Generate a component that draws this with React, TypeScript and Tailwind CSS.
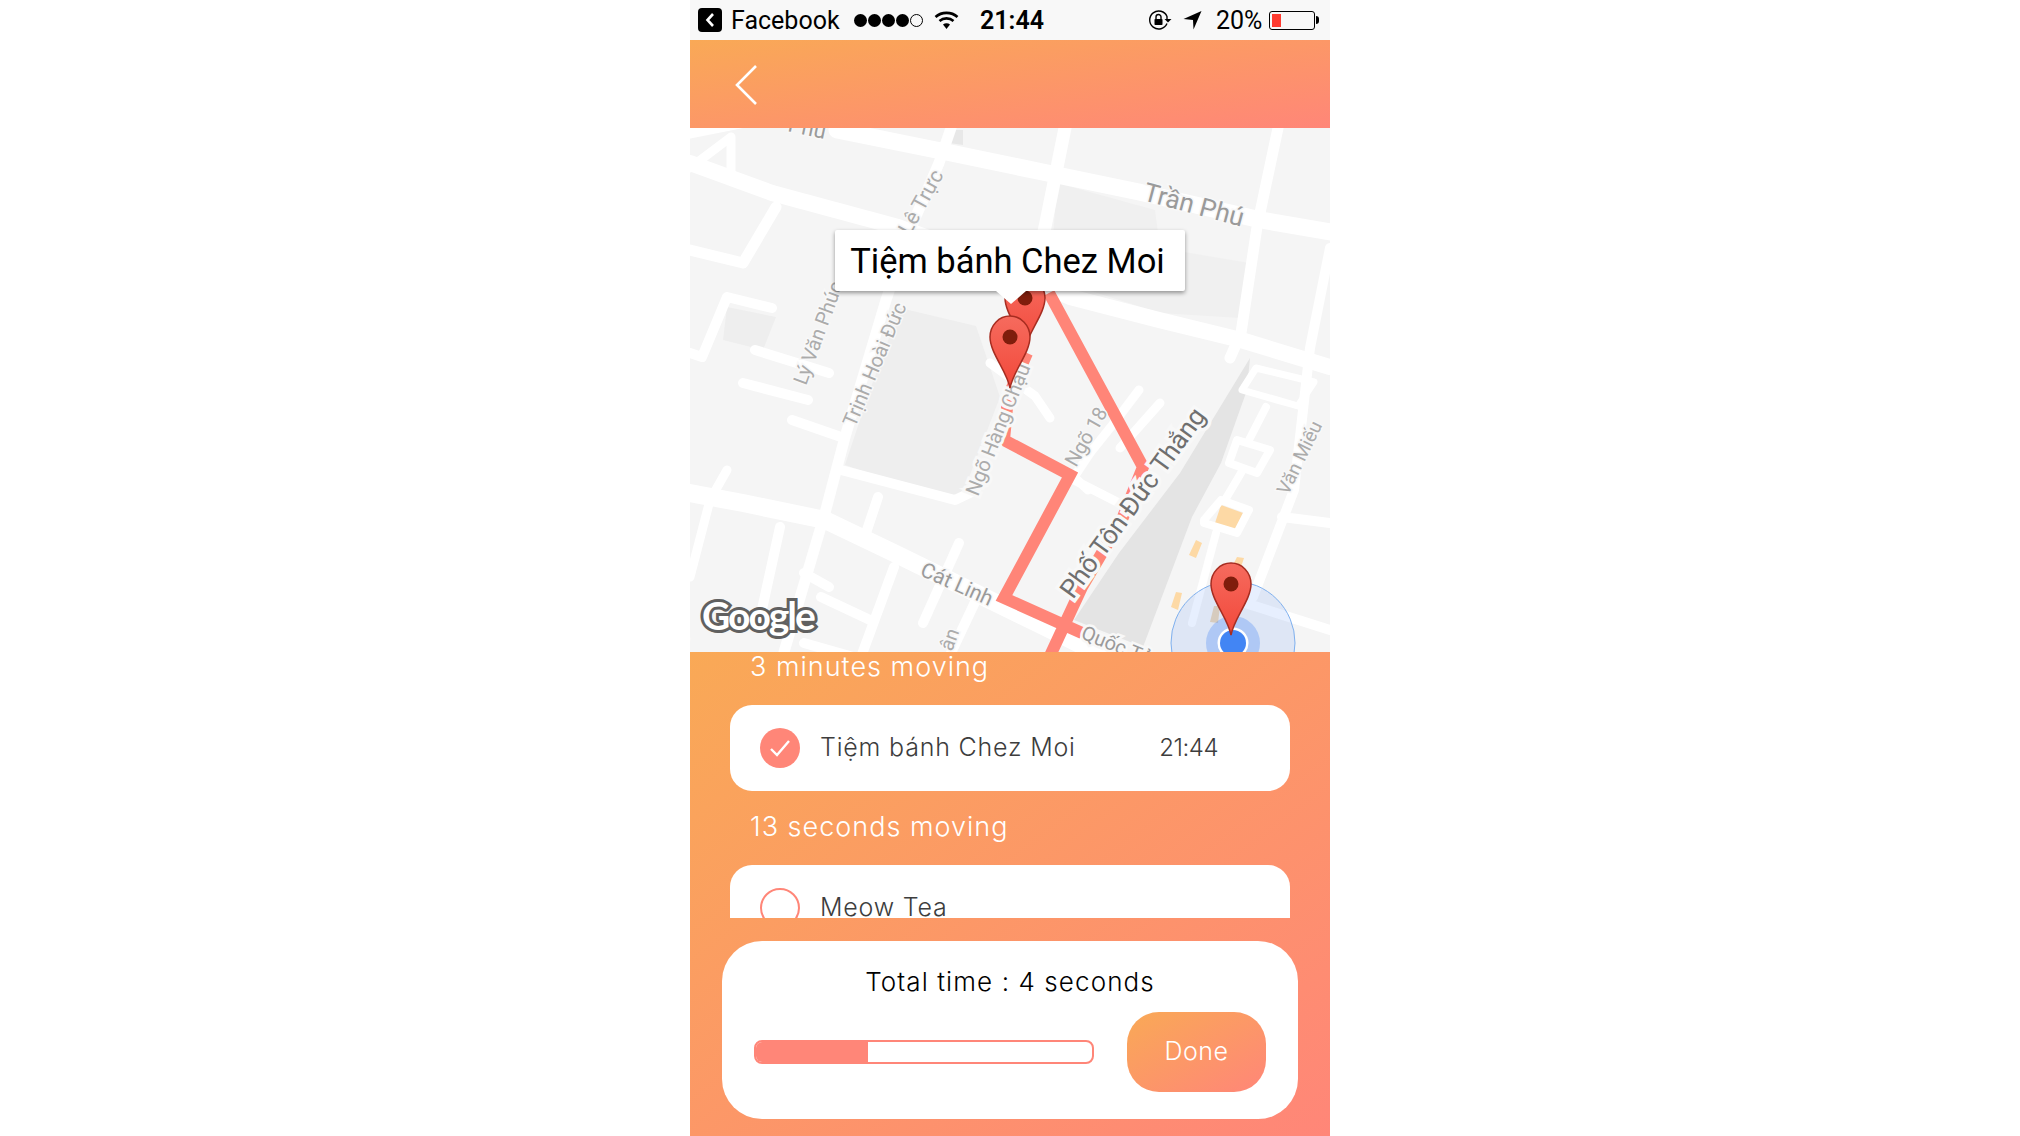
const uiFont = { fontFamily: '"Inter", "Noto Sans", sans-serif' };

const roads: { d: string; w: number }[] = [
  { d: "M0 2 L60 -10 M147 2 L261 25 L367 47 L449 64 L571 92 L640 104", w: 17 },
  { d: "M0 35 L82 65 L208 99 L300 132 L380 169 L469 192 L551 212 L640 239", w: 16 },
  { d: "M375 0 L355 99 L340 165", w: 13 },
  { d: "M588 0 L567 99 L551 205 L540 230", w: 11 },
  { d: "M261 0 L249 35 L220 102 L196 172 L155 309 L135 385 L94 524", w: 11 },
  { d: "M37 169 L12 229 L0 225 M37 169 L82 180", w: 10 },
  { d: "M86 79 L53 135 L0 122", w: 11 },
  { d: "M41 9 L41 45 M41 9 L0 40", w: 9 },
  { d: "M65 222 L139 245 M53 255 L118 272 M102 292 L151 309", w: 10 },
  { d: "M0 365 L53 375 L135 392 L204 425 L347 495 L408 525", w: 18 },
  { d: "M151 342 L265 372 L286 362", w: 10 },
  { d: "M37 342 L20 372 L0 449", w: 9 },
  { d: "M90 399 L69 495 M188 369 L176 405 M204 439 L171 529", w: 10 },
  { d: "M114 445 L139 459 M131 469 L180 492 M269 415 L233 495 M286 472 L261 525 M114 515 L163 529", w: 10 },
  { d: "M384 352 L429 375 M449 262 L424 295 L400 325 L384 349 L398 362", w: 9 },
  { d: "M547 312 L580 322 L567 345 L539 335 Z M576 279 L559 312 M551 345 L535 372", w: 8 },
  { d: "M514 392 L531 372 L559 382 L547 405 L514 395 Z M526 405 L502 495", w: 8 },
  { d: "M640 120 L620 220 L604 362 L563 469 M592 389 L640 395 M555 475 L640 502", w: 10 },
  { d: "M566 240 L624 254 L608 278 L552 262 Z", w: 7 },
  { d: "M470 275 L430 320 M300 235 L345 268 L360 290", w: 9 },
];

const blocks = [
  { points: "210,180 286,198 310,269 273,365 257,372 155,337 180,262", fill: "#eeeeee" },
  { points: "367,55 465,82 470,120 560,135 550,190 470,185 360,150", fill: "#f0f0f0" },
  { points: "37,179 86,189 73,222 33,212", fill: "#eeeeee" },
  { points: "261,2 273,2 273,17 259,15", fill: "#e8e8e8" },
  { points: "560,230 557,262 531,335 502,389 453,519 384,492 429,425 490,345", fill: "#e4e4e4" },
  { points: "531,377 553,385 545,402 525,395", fill: "#fdd9a5" },
  { points: "506,412 512,415 506,430 499,427", fill: "#fdd9a5" },
  { points: "486,464 492,465 488,482 481,479", fill: "#fdd9a5" },
  { points: "547,429 554,430 551,439 543,437", fill: "#fdd9a5" },
  { points: "524,478 530,478 528,495 520,494", fill: "#ecd6b6" },
];

const labels = [
  { text: "Phú", x: 97, y: 3, r: 12, size: 22, fill: "#9a9a9a", halo: 3 },
  { text: "Trần Phú", x: 452, y: 72, r: 15, size: 26, fill: "#9a9a9a", halo: 3 },
  { text: "Lê Trực", x: 220, y: 108, r: -61, size: 21, fill: "#ababab", halo: 3 },
  { text: "Lý Văn Phúc", x: 116, y: 258, r: -70, size: 20, fill: "#ababab", halo: 3 },
  { text: "Trịnh Hoài Đức", x: 165, y: 300, r: -67, size: 20, fill: "#ababab", halo: 3 },
  { text: "Ngõ Hàng Chậu", x: 288, y: 369, r: -68, size: 20, fill: "#ababab", halo: 6 },
  { text: "Ngõ 18", x: 386, y: 340, r: -60, size: 20, fill: "#ababab", halo: 3 },
  { text: "Văn Miếu", x: 598, y: 368, r: -64, size: 19, fill: "#ababab", halo: 3 },
  { text: "Cát Linh", x: 229, y: 447, r: 24, size: 21, fill: "#9a9a9a", halo: 3 },
  { text: "Quốc Tử Giám", x: 390, y: 510, r: 22, size: 20, fill: "#9a9a9a", halo: 5 },
  { text: "Phố Tôn Đức Thắng", x: 383, y: 472, r: -54, size: 26, fill: "#6f6f6f", halo: 7 },
  { text: "ân", x: 262, y: 524, r: -70, size: 20, fill: "#ababab", halo: 3 },
  { text: "h", x: -4, y: 520, r: -70, size: 20, fill: "#ababab", halo: 3 },
];

function Pin({ x, y }: { x: number; y: number }) {
  return (
    <g transform={`translate(${x} ${y})`}>
      <path
        d="M0 51 C-3 34 -20 16 -20 0 A20 21 0 0 1 20 0 C20 16 3 34 0 51 Z"
        fill="url(#pinFill)"
        stroke="#a62c20"
        strokeWidth="1.5"
      />
      <circle r="7.5" fill="#7f1d0c" />
    </g>
  );
}

function StatusBar() {
  return (
    <div className="h-10 bg-[#f8f8f8] flex items-center pl-2 text-black" style={{ fontFamily: "Roboto, sans-serif" }}>
      <div className="w-6 h-6 rounded-[4px] bg-black flex items-center justify-center">
        <svg width="12" height="16" viewBox="0 0 12 16" fill="none">
          <path d="M9 2 L3.5 8 L9 14" stroke="white" strokeWidth="2.6" />
        </svg>
      </div>
      <span className="ml-[9px] w-[110px] text-[25px] leading-none">Facebook</span>
      <div className="ml-[13px] flex items-center gap-[1px]">
        <span className="w-[13px] h-[13px] rounded-full bg-black" />
        <span className="w-[13px] h-[13px] rounded-full bg-black" />
        <span className="w-[13px] h-[13px] rounded-full bg-black" />
        <span className="w-[13px] h-[13px] rounded-full bg-black" />
        <span className="w-[13px] h-[13px] rounded-full border border-black" />
      </div>
      <svg className="ml-[11px]" width="25" height="20" viewBox="0 0 25 20" fill="none">
        <path d="M1.5 7 C7.5 1.5 17.5 1.5 23.5 7" stroke="black" strokeWidth="2.6" />
        <path d="M5.5 11 C9.5 7.5 15.5 7.5 19.5 11" stroke="black" strokeWidth="2.6" />
        <path d="M9 14.5 C11 12.8 14 12.8 16 14.5 L12.5 19 Z" fill="black" />
      </svg>
      <span className="ml-[21px] w-[66px] text-[25px] leading-none font-semibold">21:44</span>
      <svg className="ml-[102px]" width="24" height="20" viewBox="0 0 24 20" fill="none">
        <path d="M19 13.5 A9 9 0 1 1 19 6.5 L19 9" stroke="black" strokeWidth="1.4" />
        <path d="M16.5 9 L23.5 9 L20 12.5 Z" fill="black" />
        <rect x="6.5" y="9" width="8" height="6" rx="0.8" fill="black" />
        <path d="M8 9 V7 A2.5 2.5 0 0 1 13 7 V9" stroke="black" strokeWidth="1.4" />
      </svg>
      <svg className="ml-[11px]" width="19" height="20" viewBox="0 0 19 20">
        <path d="M18.5 1 L10.5 19.5 L10 10 L0.5 9 Z" fill="black" />
      </svg>
      <span className="ml-[14px] w-[50px] text-[25px] leading-none">20%</span>
      <div className="ml-[3px] w-[46px] h-[19px] rounded-[3px] border border-black p-[2px] relative">
        <div className="w-[9px] h-full bg-[#ff3b30]" />
        <div className="absolute right-[-5px] top-[4px] w-[3px] h-[8px] rounded-r-sm bg-black" />
      </div>
    </div>
  );
}

function MapView() {
  return (
    <div className="relative h-[524px] overflow-hidden bg-[#f5f5f5]">
      <svg width="640" height="524" viewBox="0 0 640 524" className="block">
        <defs>
          <linearGradient id="pinFill" x1="0" y1="0" x2="0" y2="1">
            <stop offset="0" stopColor="#f66b5e" />
            <stop offset="1" stopColor="#f2483a" />
          </linearGradient>
        </defs>
        {blocks.map((b) => (
          <polygon key={b.points} points={b.points} fill={b.fill} />
        ))}
        {roads.map((r) => (
          <path key={r.d} d={r.d} fill="none" stroke="#ffffff" strokeWidth={r.w} strokeLinecap="round" strokeLinejoin="round" />
        ))}
        <path
          d="M359 165 L453 339 L433 389 L392 459 L359 530 M337 225 L318 269 L314 312 L380 347 L314 470 L392 505"
          fill="none"
          stroke="#ff8578"
          strokeWidth="12"
          strokeLinejoin="miter"
        />
        {labels.map((l) => (
          <text
            key={l.text}
            x={l.x}
            y={l.y}
            fontSize={l.size}
            fill={l.fill}
            stroke="#f8f8f8"
            strokeWidth={l.halo}
            paintOrder="stroke"
            fontFamily="Roboto, sans-serif"
            transform={`rotate(${l.r} ${l.x} ${l.y})`}
          >
            {l.text}
          </text>
        ))}
        <text
          x="12"
          y="502"
          fontSize="39"
          fontWeight="700"
          letterSpacing="-2"
          fill="#ffffff"
          stroke="#606060"
          strokeWidth="6"
          paintOrder="stroke"
          fontFamily="Lato, sans-serif"
        >
          Google
        </text>
        <circle cx="543" cy="515" r="62" fill="#4285f4" fillOpacity="0.13" stroke="#7fb0ee" strokeWidth="1" />
        <circle cx="543" cy="515" r="27" fill="#4285f4" fillOpacity="0.3" />
        <circle cx="543" cy="515" r="15.5" fill="#ffffff" />
        <circle cx="543" cy="515" r="13" fill="#4285f4" />
        <Pin x={335} y={170} />
        <Pin x={320} y={209} />
        <Pin x={541} y={456} />
      </svg>
      <div
        className="absolute left-[145px] top-[102px] w-[350px] h-[61px] pt-[2px] pr-[5px] bg-white rounded-[2px] shadow-[0_2px_4px_rgba(0,0,0,0.4)] flex items-center justify-center text-[34.5px] text-black"
        style={{ fontFamily: "Roboto, sans-serif" }}
      >
        Tiệm bánh Chez Moi
        <svg className="absolute left-[161px] top-[61px]" width="30" height="13" viewBox="0 0 30 13">
          <path d="M0 0 L30 0 L15 13 Z" fill="white" />
        </svg>
      </div>
    </div>
  );
}

function StopCard({ name, time, done }: { name: string; time?: string; done?: boolean }) {
  return (
    <div className="mx-10 h-[86px] shrink-0 rounded-[22px] bg-white flex items-center pl-[30px] pr-[72px] text-[#3d3d3d] text-[25px] font-light">
      {done ? (
        <div className="w-10 h-10 rounded-full bg-[#ff8678] flex items-center justify-center">
          <svg width="22" height="18" viewBox="0 0 22 18" fill="none">
            <path d="M2 10 L8 16 L20 2" stroke="white" strokeWidth="2.4" />
          </svg>
        </div>
      ) : (
        <div className="w-10 h-10 rounded-full border-2 border-[#ff8678]" />
      )}
      <span className="ml-5 flex-1 tracking-[0.8px]">{name}</span>
      {time && <span className="text-[24px] tracking-[-0.5px]">{time}</span>}
    </div>
  );
}

export default function App() {
  return (
    <div className="min-h-screen bg-white flex justify-center" style={uiFont}>
      <div className="w-[640px] h-[1136px] overflow-hidden">
        <StatusBar />
        <div className="h-[88px] bg-linear-to-br/srgb from-[#f9a956] to-[#ff8678] flex items-center pl-[44px] pt-[2px]">
          <svg width="24" height="42" viewBox="0 0 24 42" fill="none">
            <path d="M22 2 L3 21 L22 40" stroke="white" strokeWidth="2.6" />
          </svg>
        </div>
        <MapView />
        <div className="h-[484px] bg-linear-to-br/srgb from-[#f9a956] to-[#ff8678]">
          <div className="h-[266px] overflow-hidden flex flex-col">
            <div className="h-[30px] mb-[23px] pl-[60px] text-white text-[27px] tracking-[1px] font-light leading-[30px] shrink-0">3 minutes moving</div>
            <StopCard name="Tiệm bánh Chez Moi" time="21:44" done />
            <div className="mt-[21px] h-[30px] mb-[23px] pl-[60px] text-white text-[27px] tracking-[1px] font-light leading-[30px] shrink-0">13 seconds moving</div>
            <StopCard name="Meow Tea" />
          </div>
          <div className="mx-8 mt-[23px] h-[178px] rounded-[40px] bg-white pt-[26px] pl-[32px] pr-[32px]">
            <div className="text-center text-[26px] tracking-[1.1px] font-light leading-[30px] text-black">Total time : 4 seconds</div>
            <div className="mt-[15px] flex items-center justify-between">
              <div className="w-[340px] h-6 rounded-[8px] border-2 border-[#ff8678] overflow-hidden bg-white">
                <div className="w-[112px] h-full bg-[#ff8678]" />
              </div>
              <button
                type="button"
                className="w-[139px] h-20 rounded-[32px] bg-linear-to-br/srgb from-[#f9a956] to-[#ff8678] text-white text-[25px] tracking-[0.5px] font-light"
              >
                Done
              </button>
            </div>
          </div>
        </div>
      </div>
    </div>
  );
}
